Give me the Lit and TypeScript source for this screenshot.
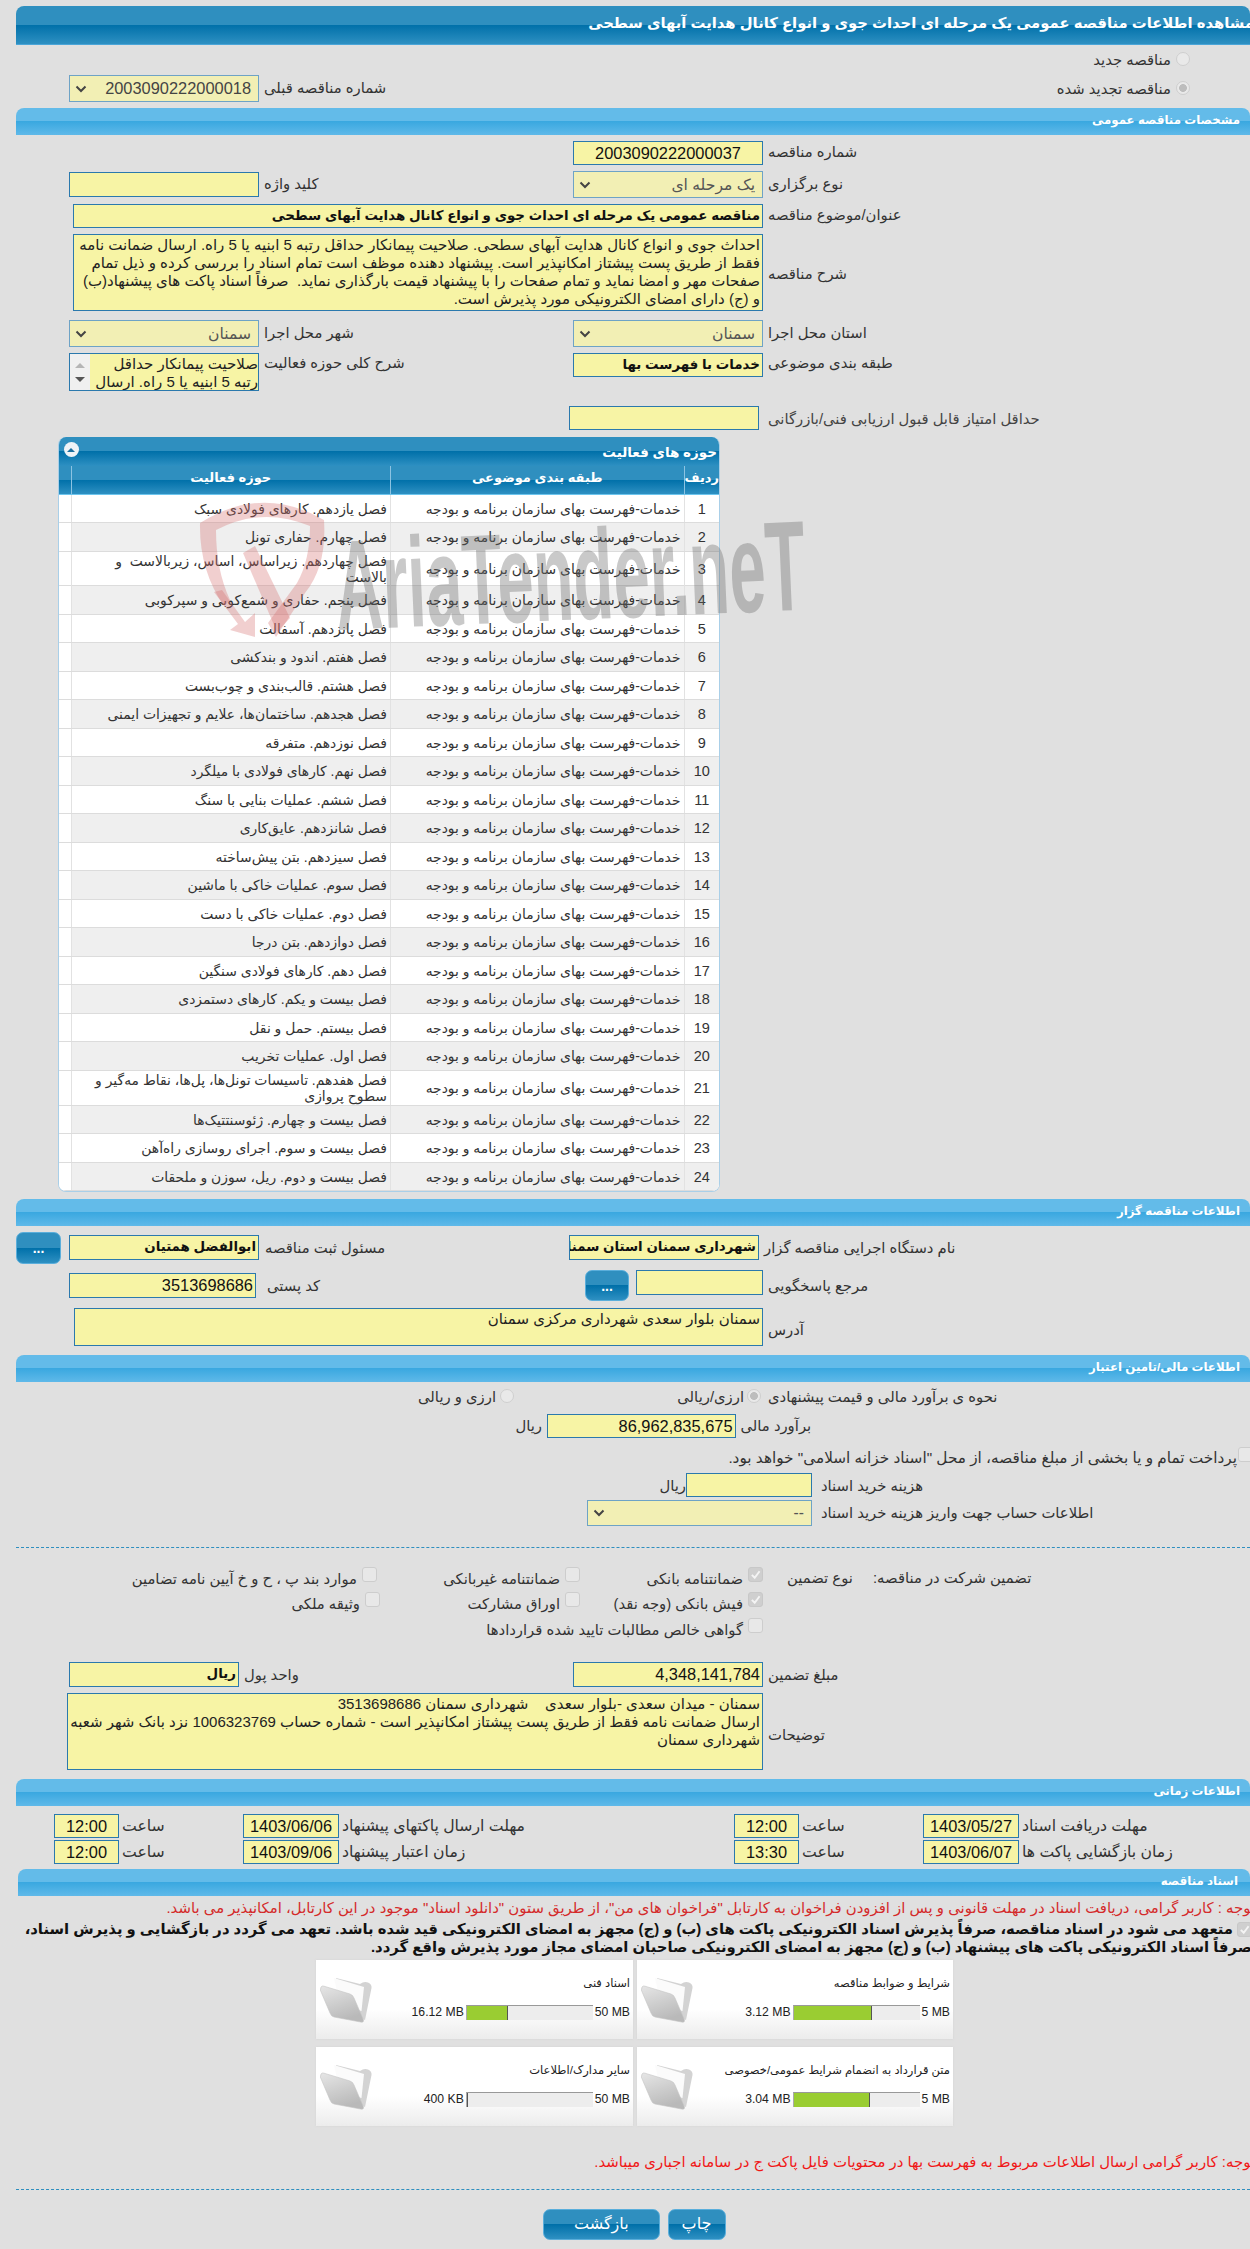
import { LitElement, html, css } from "lit";
import { customElement } from "lit/decorators.js";

const ACT: string[] = [
  "فصل یازدهم. کارهای فولادی سبک",
  "فصل چهارم. حفاری تونل",
  "فصل چهاردهم. زیراساس، اساس، زیربالاست  و|بالاست",
  "فصل پنجم. حفاری و شمع‌کوبی و سپرکوبی",
  "فصل پانزدهم. آسفالت",
  "فصل هفتم. اندود و بندکشی",
  "فصل هشتم. قالب‌بندی و چوب‌بست",
  "فصل هجدهم. ساختمان‌ها، علایم و تجهیزات ایمنی",
  "فصل نوزدهم. متفرقه",
  "فصل نهم. کارهای فولادی با میلگرد",
  "فصل ششم. عملیات بنایی با سنگ",
  "فصل شانزدهم. عایق‌کاری",
  "فصل سیزدهم. بتن پیش‌ساخته",
  "فصل سوم. عملیات خاکی با ماشین",
  "فصل دوم. عملیات خاکی با دست",
  "فصل دوازدهم. بتن درجا",
  "فصل دهم. کارهای فولادی سنگین",
  "فصل بیست و یکم. کارهای دستمزدی",
  "فصل بیستم. حمل و نقل",
  "فصل اول. عملیات تخریب",
  "فصل هفدهم. تاسیسات تونل‌ها، پل‌ها، نقاط مه‌گیر و|سطوح پروازی",
  "فصل بیست و چهارم. ژئوسنتتیک‌ها",
  "فصل بیست و سوم. اجرای روسازی راه‌آهن",
  "فصل بیست و دوم. ریل، سوزن و ملحقات",
];
const CAT = "خدمات-فهرست بهای سازمان برنامه و بودجه";

const CARDS = [
  { t: "اسناد فنی", u: "16.12 MB", m: "50 MB", p: 33 },
  { t: "شرایط و ضوابط مناقصه", u: "3.12 MB", m: "5 MB", p: 62.4 },
  { t: "سایر مدارک/اطلاعات", u: "400 KB", m: "50 MB", p: 1 },
  { t: "متن قرارداد به انضمام شرایط عمومی/خصوصی", u: "3.04 MB", m: "5 MB", p: 60.8 },
];

const chevron = html`<svg class="chev" viewBox="0 0 12 8"><path d="M1.5 1.5 6 6l4.5-4.5" fill="none" stroke="#444" stroke-width="2"/></svg>`;
const sel = (t: string, cls = "") => html`<div class="sel ${cls}">${chevron}<span dir="rtl">${t}</span></div>`;
const inp = (t: string, cls = "") => html`<div class="inp ${cls}" dir="rtl">${t}</div>`;
const lab = (t: string, cls = "") => html`<div class="lab ${cls}" dir="rtl">${t}</div>`;
const radio = (on = false, cls = "") => html`<span class="radio ${on ? "on" : ""} ${cls}"></span>`;
const check = (on = false) => html`<span class="cb ${on ? "on" : ""}">${on ? html`<svg viewBox="0 0 16 16"><path d="M3.5 8.5 7 12l6-8" fill="none" stroke="#f4f4f4" stroke-width="2.4"/></svg>` : ""}</span>`;
const cbl = (t: string, on = false, cls = "") => html`<div class="cbl ${cls}">${check(on)}<span class="lab" dir="rtl">${t}</span></div>`;

const folder = html`<svg class="folder" viewBox="0 0 52 46">
  <defs>
    <linearGradient id="ff" x1="0" y1="0" x2="0.4" y2="1"><stop offset="0" stop-color="#e6e6e6"/><stop offset="1" stop-color="#b9b9b9"/></linearGradient>
  </defs>
  <path d="M16 1 40 7q4-3 8-1.500 4 1.500 3.500 5.500L45 43 20 30Z" fill="#d3d3d3"/>
  <path d="M14 1 44 10 41.500 34 20 28Z" fill="#fbfbfb"/>
  <path d="M1 10q1-1.500 3-.8L30 17q3 1 4 4l9.500 22q.5 3-3 2L14 40q-3-.8-4-4L.3 13Z" fill="url(#ff)" stroke="#c4c4c4" stroke-width=".6"/>
</svg>`;

@customElement("app-root")
export class AppRoot extends LitElement {
  static styles = css`
    :host { display: block; width: 1250px; height: 2249px; overflow: hidden; }
    * { box-sizing: border-box; }
    .page { position: relative; width: 1250px; height: 2249px; overflow: hidden; background: #e0e0e0; padding-top: 6px;
      font-family: "Liberation Sans", "DejaVu Sans", sans-serif; font-size: 12.5px; color: #222; direction: ltr; }
    .title { height: 39px; margin-left: 16px; border-radius: 8px 8px 0 0; color: #fff; font-weight: bold; font-size: 14.800px; line-height: 35px;
      text-indent: -4px; background: linear-gradient(#2f8fbf 0 50%, #0070a9 50%, #2e90c2 100%); border-bottom: 1px solid #4aa5d8; white-space: nowrap; overflow: hidden; }
    .sec { height: 27px; margin-left: 16px; border-radius: 8px 8px 0 0; color: #fff; font-weight: bold; font-size: 11.800px; line-height: 25px; padding-right: 10px;
      background: linear-gradient(#63bbe9 0 50%, #3aa8e0 50%, #5fb9e9 100%); white-space: nowrap; }
    .sec.docs { margin-left: 18px; padding-right: 12px; margin-top: 5px; }
    .m7 { margin-top: 7px; } .m9 { margin-top: 9px; }

    .intro { display: flex; justify-content: space-between; height: 63px; }
    .intro .prev { display: flex; padding: 30px 0 0 69px; gap: 5px; }
    .prevsel { width: 190px; }
    .intro .radios { display: flex; flex-direction: column; gap: 14.600px; padding: 7px 60px 0 0; align-items: flex-end; }
    .rl { display: flex; align-items: center; gap: 5px; height: 14px; }
    .rl .lab { margin-top: 2px; }

    .radio { display: block; flex: none; width: 14px; height: 14px; border-radius: 50%; border: 1px solid #cfcfcf; background: #e9e9e9; }
    .radio.on { background: radial-gradient(circle, #bdbdbd 0 3.600px, #e9e9e9 4.200px); }
    .cb { display: block; flex: none; width: 15px; height: 15px; border-radius: 3px; border: 1px solid #cdcdcd; background: #e8e8e8; }
    .cb.on { background: #cfcfcf; border-color: #c8c8c8; }
    .cb svg { display: block; width: 13px; height: 13px; }

    .inp { background: #f7f4a5; border: 1px solid #2b79ad; height: 24px; line-height: 22px; padding: 0 2px; overflow: hidden; white-space: nowrap; color: #111; font-size: 15px; }
    .inp.num { font-size: 16.400px; }
    .inp.center { text-align: center; }
    .inp.b { font-weight: bold; font-size: 13.400px; }
    .sel { background: #f2efb4; border: 1px solid #6ea3c6; height: 27px; display: flex; align-items: center; justify-content: space-between; padding: 0 7px 0 5px; color: #555; font-size: 15.600px; }
    .sel.num { font-size: 16.400px; color: #444; }
    .chev { width: 12px; height: 8px; flex: none; }
    .lab { font-size: 14.800px; line-height: 20px; color: #333; white-space: nowrap; text-align: left; }

    .g { display: grid; grid-template-columns: 69px 190px 5px 309px 190px 5px 1fr; align-items: start; }
    .li { grid-column: 2; } .ll { grid-column: 4; } .ri { grid-column: 5; } .rl2 { grid-column: 7; }
    .wi { grid-column: 2 / 6; margin-left: 4px; }
    .mid { padding-top: 3px; }
    .top1 { padding-top: 1px; }
    .a { margin-top: 6px; height: 24px; }
    .b1 { margin-top: 6px; height: 27px; }
    .c { margin-top: 6px; height: 24px; }
    .d { margin-top: 6px; height: 77px; }
    .e { margin-top: 9px; height: 27px; }
    .f { margin-top: 6px; height: 38px; }
    .d .ta, .q .ta { height: 77px; }
    .ta { background: #f7f4a5; border: 1px solid #2b79ad; font-size: 15px; line-height: 18px; padding: 1px 2px; white-space: pre; overflow: hidden; color: #222; }
    .lmid { align-self: center; padding-top: 2px; }
    .t1 { margin-top: 1px; height: 25px; }
    .scroll { display: flex; height: 38px; border: 1px solid #2b79ad; background: #f7f4a5; overflow: hidden; }
    .scroll .bar { flex: none; width: 20px; background: #f0f0f0; display: flex; flex-direction: column; align-items: center; justify-content: space-around; padding: 4px 0; }
    .scroll .tx { flex: 1; font-size: 15px; line-height: 18px; white-space: nowrap; overflow: hidden; text-align: right; color: #222; padding-top: 1px; }
    .up { width: 0; height: 0; border: 5px solid transparent; border-top: 0; border-bottom: 5px solid #b5b5b5; }
    .dn { width: 0; height: 0; border: 5px solid transparent; border-bottom: 0; border-top: 5px solid #555; }
    .gscore { display: grid; grid-template-columns: 568.500px 190px 9.500px 1fr; margin-top: 15px; height: 24px; }
    .gscore .inp { grid-column: 2; } .gscore .lab { grid-column: 4; padding-top: 3px; color: #444; }

    .panel { margin: 7px 0 0 57.500px; width: 662.500px; height: 755px; border: 1px solid #a9cfe8; border-radius: 8px; overflow: hidden; background: #fff; border-top: 0; }
    .ph { height: 29px; background: linear-gradient(#2f8fbf 0 50%, #0070a9 50%, #2e90c2 100%); display: flex; justify-content: space-between; align-items: center; padding: 0 2px 0 5px; color: #fff; font-weight: bold; font-size: 13.500px; }
    .toggle { width: 15px; height: 15px; border-radius: 50%; background: #eef3f7; display: flex; align-items: center; justify-content: center; margin-top: -4px; }
    .toggle i { display: block; width: 0; height: 0; border: 4px solid transparent; border-top: 0; border-bottom: 4px solid #1b6f9e; }
    .tr { display: grid; grid-template-columns: 12px 319.500px 293.500px 1fr; }
    .th { height: 28.500px; background: linear-gradient(#2f8fbf 0 50%, #0070a9 50%, #2e90c2 100%); border-bottom: 1px solid #6cc5ee; color: #fff; font-weight: bold; font-size: 13px; }
    .th > div { border-left: 1px solid #8cc3e2; text-align: center; line-height: 24px; white-space: nowrap; overflow: hidden; }
    .th > div:first-child { border-left: 0; }
    .row { height: 28.500px; border-bottom: 1px solid #dcdcdc; background: #fff; font-size: 13.900px; color: #333; }
    .row.tall { height: 34.900px; }
    .row.alt > div:not(:first-child) { background: #efefef; }
    .row > div { display: flex; align-items: center; justify-content: flex-start; padding: 1px 3px 0; border-left: 1px solid #e2e2e2; line-height: 16.500px; white-space: pre; }
    .row > div:first-child { border-left: 0; }
    .row .n { justify-content: center; font-size: 14.500px; }

    .rh { margin-top: 6px; height: 32px; grid-template-columns: 16px 45px 8px 190px 6px 304px 190px 5px 1fr; }
    .btn { color: #fff; border-radius: 7px; border: 1px solid #5aaedb; background: linear-gradient(#2f8fbf 0 50%, #0070a9 50%, #2e90c2 100%); display: flex; align-items: center; justify-content: center; font-size: 14px; line-height: 1; }
    .rh .btn { grid-column: 2; height: 32px; font-weight: bold; }
    .rh .inp { margin-top: 3px; height: 25px; }
    .rh .i1 { grid-column: 4; } .rh .l1 { grid-column: 6; padding-top: 6px; } .rh .i2 { grid-column: 7; } .rh .l2 { grid-column: 9; padding-top: 6px; }
    .ri2 { margin-top: 6px; height: 31px; grid-template-columns: 69px 187px 11px 318px 44px 7px 127px 5px 1fr; }
    .ri2 .i1 { grid-column: 2; margin-top: 3px; height: 25px; }
    .ri2 .l1 { grid-column: 4; padding-top: 6px; }
    .ri2 .btn { grid-column: 5; height: 31px; font-weight: bold; }
    .ri2 .i2 { grid-column: 7; height: 25px; }
    .ri2 .l2 { grid-column: 9; padding-top: 6px; }
    .j { margin-top: 7px; height: 38px; grid-template-columns: 74px 689px 5px 1fr; }
    .j .ta { grid-column: 2; height: 38px; }
    .j .lab { grid-column: 4; padding-top: 12px; }

    .k { height: 32px; display: flex; padding: 7px 0 0 420px; align-items: flex-start; }
    .k .lab { margin-top: -2px; }
    .k .lr1 { width: 76px; text-align: right; }
    .k .r1 { margin-left: 4px; }
    .k .lr2 { width: 66px; margin-left: 164px; text-align: right; }
    .k .r2 { margin-left: 3px; }
    .k .l0 { margin-left: 7px; }
    .l { height: 24px; display: grid; grid-template-columns: 518px 24px 5px 188.500px 5px 1fr; }
    .l .u { grid-column: 2; } .l .inp { grid-column: 4; } .l .v { grid-column: 6; }
    .l .lab { padding-top: 2px; }
    .mm { margin-top: 9px; height: 18px; display: flex; justify-content: flex-end; gap: 2px; align-items: flex-start; }
    .mm .lab { margin-top: 1px; margin-right: -1px; font-size: 15.300px; }
    .mm .cb { margin-right: -3px; }
    .n1 { margin-top: 8px; height: 24px; display: grid; grid-template-columns: 662px 24px 126px 9px 1fr; }
    .n1 .u { grid-column: 2; } .n1 .inp { grid-column: 3; } .n1 .v { grid-column: 5; }
    .n1 .lab { padding-top: 3px; }
    .o { margin-top: 3px; height: 26px; display: grid; grid-template-columns: 587px 225px 9px 1fr; }
    .o .sel { grid-column: 2; height: 26px; }
    .o .lab { grid-column: 4; padding-top: 3px; }

    .dash { margin-left: 16px; border-top: 1px dashed #2f8fbf; height: 0; }
    .d1 { margin-top: 21px; } .d2 { margin-top: 17px; }
    .gar { margin-top: 19px; display: grid; grid-template-columns: 380px 200px 183px 24px 66px 20px 1fr; grid-auto-rows: 25.300px; }
    .cbl { display: flex; justify-content: flex-end; align-items: flex-start; gap: 5px; }
    .cbl .lab { margin-top: 2px; order: -1; }
    .nudge { padding-right: 3px; }
    .gar .c5 { grid-column: 5; } .gar .c7 { grid-column: 7; }
    .gar .text { padding-top: 1px; }
    .gar .c3 { grid-column: 3; }
    .p { margin-top: 19px; height: 25px; display: grid; grid-template-columns: 69px 170px 5px 329px 190px 5px 1fr; }
    .p .inp { height: 25px; }
    .p .i1 { grid-column: 2; } .p .l1 { grid-column: 4; padding-top: 3px; } .p .i2 { grid-column: 5; } .p .l2 { grid-column: 7; padding-top: 3px; }
    .q { margin-top: 6px; height: 77px; display: grid; grid-template-columns: 67px 696px 5px 1fr; }
    .q .ta { grid-column: 2; }
    .q .lab { grid-column: 4; padding-top: 32px; }

    .tm { height: 24px; display: grid; grid-template-columns: 54px 65px 124px 96px 395px 65px 124px 96px 1fr; }
    .tm .lab { padding: 2px 0 0 3px; font-size: 15.700px; }
    .tm1 { margin-top: 8px; } .tm2 { margin-top: 2px; }
    .tm .c2 { grid-column: 2; } .tm .c4 { grid-column: 4; } .tm .c6 { grid-column: 6; } .tm .c8 { grid-column: 8; }

    .note { color: #d42a2a; font-size: 14.900px; line-height: 20px; white-space: nowrap; margin: 2px -5px 0 0; text-align: right; }
    .commit { margin: 2px -2px 0 0; font-weight: bold; font-size: 14.800px; line-height: 18px; white-space: nowrap; color: #111; text-align: right; height: 35px; }
    .commit .cb { display: inline-block; vertical-align: -3px; margin-left: 4px; }
    .cards { margin: 5px 0 0 316px; width: 637px; display: grid; grid-template-columns: 317px 316px; gap: 8px 4px; }
    .card { height: 79px; padding: 5px 3px 0 4px; position: relative; display: grid; grid-template-columns: 52px 1fr; box-shadow: 0 0 2px #d2d2d2;
      background: linear-gradient(#fff 0 62%, #ececec 100%); }
    .folder { width: 52px; height: 46px; margin-top: 12px; }
    .cbody { display: flex; flex-direction: column; }
    .ct { font-size: 11.500px; line-height: 18px; text-align: right; white-space: nowrap; margin-top: 9px; color: #222; }
    .prog { display: flex; justify-content: flex-end; align-items: center; gap: 2px; margin-top: 13px; font-size: 12.200px; color: #222; }
    .track { width: 127px; height: 15px; background: #ededed; border-top: 1px solid #999; border-left: 1px solid #aaa; direction: ltr; }
    .fill { height: 100%; background: #9acd32; border-right: 1px solid #555; }
    .note2 { color: #f01818; font-size: 14.900px; line-height: 20px; white-space: nowrap; margin: 26px -5px 0 0; text-align: right; }
    .actions { margin-top: 19px; display: flex; gap: 7.500px; padding-left: 542.500px; }
    .actions .btn { height: 31px; font-size: 16px; }
    .back { width: 117.500px; } .print { width: 58px; }

    .wm { position: absolute; left: 0; top: 0; width: 1250px; height: 700px; pointer-events: none; }
    .wmt { position: absolute; left: 338px; top: 522px; font-family: "Liberation Sans", sans-serif; font-weight: bold; font-size: 128px; line-height: 128px; color: rgba(105,105,105,.36);
      white-space: nowrap; transform-origin: 0 100%; transform: rotate(-2.500deg) scaleX(.51); }
    .wms { position: absolute; left: 0; top: 0; width: 1250px; height: 700px; }
  `;

  render() {
    return html`<div class="page">
      <div class="title" dir="rtl">مشاهده اطلاعات مناقصه عمومی یک مرحله ای احداث جوی و انواع کانال هدایت آبهای سطحی</div>
      <div class="intro">
        <div class="prev">${sel("2003090222000018", "num prevsel")}${lab("شماره مناقصه قبلی", "mid")}</div>
        <div class="radios">
          <div class="rl">${lab("مناقصه جدید")}${radio()}</div>
          <div class="rl">${lab("مناقصه تجدید شده")}${radio(true)}</div>
        </div>
      </div>

      <div class="sec" dir="rtl">مشخصات مناقصه عمومی</div>
      <div class="g a">${inp("2003090222000037", "ri num center")}${lab("شماره مناقصه", "rl2 top1")}</div>
      <div class="g b1">
        ${inp("", "li t1")}${lab("کلید واژه", "ll mid")}
        ${sel("یک مرحله ای", "ri")}${lab("نوع برگزاری", "rl2 mid")}
      </div>
      <div class="g c">${inp("مناقصه عمومی یک مرحله ای احداث جوی و انواع کانال هدایت آبهای سطحی", "wi b")}${lab("عنوان/موضوع مناقصه", "rl2 top1")}</div>
      <div class="g d">
        <div class="ta wi" dir="rtl">احداث جوی و انواع کانال هدایت آبهای سطحی. صلاحیت پیمانکار حداقل رتبه 5 ابنیه یا 5 راه. ارسال ضمانت نامه<br>فقط از طریق پست پیشتاز امکانپذیر است. پیشنهاد دهنده موظف است تمام اسناد را بررسی کرده و ذیل تمام<br>صفحات مهر و امضا نماید و تمام صفحات را با پیشنهاد قیمت بارگذاری نماید.  صرفاً اسناد پاکت های پیشنهاد(ب)<br>و (ج) دارای امضای الکترونیکی مورد پذیرش است.</div>
        ${lab("شرح مناقصه", "rl2 lmid")}
      </div>
      <div class="g e">
        ${sel("سمنان", "li")}${lab("شهر محل اجرا", "ll mid")}
        ${sel("سمنان", "ri")}${lab("استان محل اجرا", "rl2 mid")}
      </div>
      <div class="g f">
        <div class="li scroll"><div class="bar"><i class="up"></i><i class="dn"></i></div><div class="tx" dir="rtl">صلاحیت پیمانکار حداقل<br>رتبه 5 ابنیه یا 5 راه. ارسال</div></div>
        ${lab("شرح کلی حوزه فعالیت", "ll")}
        ${inp("خدمات با فهرست بها", "ri b")}${lab("طبقه بندی موضوعی", "rl2")}
      </div>
      <div class="gscore">${inp("")}${lab("حداقل امتیاز قابل قبول ارزیابی فنی/بازرگانی")}</div>

      <div class="panel">
        <div class="ph"><span class="toggle"><i></i></span><span dir="rtl">حوزه های فعالیت</span></div>
        <div class="tr th"><div></div><div dir="rtl">حوزه فعالیت</div><div dir="rtl">طبقه بندی موضوعی</div><div dir="rtl">ردیف</div></div>
        ${ACT.map((a, i) => {
          const parts = a.split("|");
          return html`<div class="tr row ${i % 2 ? "alt" : ""} ${parts.length > 1 ? "tall" : ""}"><div></div><div dir="rtl"><span>${parts[0]}${parts[1] ? html`<br>${parts[1]}` : ""}</span></div><div dir="rtl">${CAT}</div><div class="n">${i + 1}</div></div>`;
        })}
      </div>

      <div class="sec m7" dir="rtl">اطلاعات مناقصه گزار</div>
      <div class="g rh">
        <div class="btn">...</div>
        ${inp("ابوالفضل همتیان", "i1 b")}${lab("مسئول ثبت مناقصه", "l1")}
        ${inp("شهرداری سمنان استان سمنان", "i2 b")}${lab("نام دستگاه اجرایی مناقصه گزار", "l2")}
      </div>
      <div class="g ri2">
        ${inp("3513698686", "i1 num")}${lab("کد پستی", "l1")}
        <div class="btn">...</div>
        ${inp("", "i2")}${lab("مرجع پاسخگویی", "l2")}
      </div>
      <div class="g j">
        <div class="ta" dir="rtl">سمنان بلوار سعدی شهرداری مرکزی سمنان</div>
        ${lab("آدرس")}
      </div>

      <div class="sec m9" dir="rtl">اطلاعات مالی/تامین اعتبار</div>
      <div class="k">
        ${lab("ارزی و ریالی", "lr1")}${radio(false, "r1")}
        ${lab("ارزی/ریالی", "lr2")}${radio(true, "r2")}
        ${lab("نحوه ی برآورد مالی و قیمت پیشنهادی", "l0")}
      </div>
      <div class="l">
        ${lab("ریال", "u")}${inp("86,962,835,675", "num")}${lab("برآورد مالی", "v")}
      </div>
      <div class="mm">
        ${lab('پرداخت تمام و یا بخشی از مبلغ مناقصه، از محل "اسناد خزانه اسلامی" خواهد بود.')}${check()}
      </div>
      <div class="n1">${lab("ریال", "u")}${inp("")}${lab("هزینه خرید اسناد", "v")}</div>
      <div class="o">${sel("--")}${lab("اطلاعات حساب جهت واریز هزینه خرید اسناد")}</div>

      <div class="dash d1"></div>
      <div class="gar">
        ${cbl("موارد بند پ ، ح و خ آیین نامه تضامین", false, "nudge")}
        ${cbl("ضمانتنامه غیربانکی")}
        ${cbl("ضمانتنامه بانکی", true)}
        ${lab("نوع تضمین", "c5 text")}
        ${lab("تضمین شرکت در مناقصه:", "c7 text")}
        ${cbl("وثیقه ملکی")}
        ${cbl("اوراق مشارکت")}
        ${cbl("فیش بانکی (وجه نقد)", true)}
        ${cbl("گواهی خالص مطالبات تایید شده قراردادها", false, "c3")}
      </div>

      <div class="p">
        ${inp("ریال", "i1 b")}${lab("واحد پول", "l1")}
        ${inp("4,348,141,784", "i2 num")}${lab("مبلغ تضمین", "l2")}
      </div>
      <div class="q">
        <div class="ta" dir="rtl">سمنان - میدان سعدی -بلوار سعدی    شهرداری سمنان 3513698686<br>ارسال ضمانت نامه فقط از طریق پست پیشتاز امکانپذیر است - شماره حساب 1006323769 نزد بانک شهر شعبه<br>شهرداری سمنان</div>
        ${lab("توضیحات")}
      </div>

      <div class="sec m9" dir="rtl">اطلاعات زمانی</div>
      <div class="tm tm1">
        <span></span>${inp("12:00", "c2 num center")}${lab("ساعت")}${inp("1403/06/06", "c4 num center")}${lab("مهلت ارسال پاکتهای پیشنهاد")}
        ${inp("12:00", "c6 num center")}${lab("ساعت")}${inp("1403/05/27", "c8 num center")}${lab("مهلت دریافت اسناد")}
      </div>
      <div class="tm tm2">
        <span></span>${inp("12:00", "c2 num center")}${lab("ساعت")}${inp("1403/09/06", "c4 num center")}${lab("زمان اعتبار پیشنهاد")}
        ${inp("13:30", "c6 num center")}${lab("ساعت")}${inp("1403/06/07", "c8 num center")}${lab("زمان بازگشایی پاکت ها")}
      </div>

      <div class="sec docs" dir="rtl">اسناد مناقصه</div>
      <div class="note" dir="rtl">توجه : کاربر گرامی، دریافت اسناد در مهلت قانونی و پس از افزودن فراخوان به کارتابل "فراخوان های من"، از طریق ستون "دانلود اسناد" موجود در این کارتابل، امکانپذیر می باشد.</div>
      <div class="commit" dir="rtl">${check(true)}متعهد می شود در اسناد مناقصه، صرفاً پذیرش اسناد الکترونیکی پاکت های (ب) و (ج) مجهز به امضای الکترونیکی قید شده باشد. تعهد می گردد در بازگشایی و پذیرش اسناد،<br>صرفاً اسناد الکترونیکی پاکت های پیشنهاد (ب) و (ج) مجهز به امضای الکترونیکی صاحبان امضای مجاز مورد پذیرش واقع گردد.</div>
      <div class="cards">
        ${CARDS.map(
          (c) => html`<div class="card">
            ${folder}
            <div class="cbody">
              <div class="ct" dir="rtl">${c.t}</div>
              <div class="prog"><span>${c.u}</span><div class="track"><div class="fill" style="width:${c.p}%"></div></div><span>${c.m}</span></div>
            </div>
          </div>`
        )}
      </div>
      <div class="note2" dir="rtl">توجه: کاربر گرامی ارسال اطلاعات مربوط به فهرست بها در محتویات فایل پاکت ج در سامانه اجباری میباشد.</div>
      <div class="dash d2"></div>
      <div class="actions">
        <div class="btn back" dir="rtl">بازگشت</div>
        <div class="btn print" dir="rtl">چاپ</div>
      </div>

      <div class="wm">
        <svg class="wms" viewBox="0 0 1250 700">
          <g fill="rgba(214,110,110,.33)">
            <path d="M200 523Q262 484 324 520 327 566 305 593L276 637 268 623 297 583Q310 560 310 526 262 506 216 530 216 570 230 600L224 606Q199 570 200 523Z"/>
            <path d="M243 553 255 546 290 618 277 632Z"/>
            <path d="M222 590 245 622 255 613 255 637 230 630 238 624 214 592Z"/>
          </g>
        </svg>
        <div class="wmt">AriaTender.neT</div>
      </div>
    </div>`;
  }
}
